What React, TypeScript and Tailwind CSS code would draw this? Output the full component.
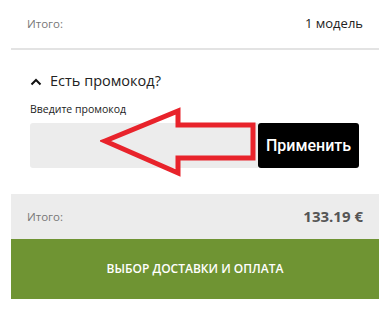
import React from 'react';

const App: React.FC = () => {
  return (
    <div className="w-[390px] h-[315px] bg-white px-[11px] font-['Open_Sans',sans-serif]">
      <div className="flex items-center justify-between h-[50px] px-4 border-b-2 border-[#e3e3e3]">
        <span className="text-[11.5px] text-[#777]">Итого:</span>
        <span className="text-[13px] text-[#222]">1 модель</span>
      </div>

      <div className="relative px-[19px] pt-[20px] h-[144px]">
        <div className="flex items-center gap-[8px] h-[22px]">
          <svg width="12" height="8" viewBox="0 0 12 8" className="mt-[1px]">
            <path d="M1.5 6.5 L6 2 L10.5 6.5" fill="none" stroke="#111" strokeWidth="2" />
          </svg>
          <span className="text-[14.5px] text-[#222]">Есть промокод?</span>
        </div>
        <div className="mt-[10px] text-[10.5px] text-[#222] leading-[14px]">Введите промокод</div>
        <div className="flex mt-[7px] h-[45px]">
          <input className="w-[228px] bg-[#ececec] rounded-l-[3px] outline-none px-3 text-sm" />
          <button className="w-[101px] bg-black text-white text-[16px] font-medium rounded-[3px] font-['Roboto',sans-serif]">
            Применить
          </button>
        </div>
        {/* red annotation arrow over the input */}
        <svg width="160" height="70" viewBox="0 0 160 70" className="absolute left-[89px] top-[57px] pointer-events-none">
          <path
            d="M5 34 L78 4 L78 18 L153 18 L153 51 L78 51 L78 66 Z"
            fill="none"
            stroke="#e8232b"
            strokeWidth="5"
            strokeLinejoin="miter"
          />
        </svg>
      </div>

      <div className="flex items-center justify-between h-[45px] px-4 bg-[#ececec]">
        <span className="text-[11.5px] text-[#777]">Итого:</span>
        <span className="text-[15px] font-bold text-[#555]">133.19 €</span>
      </div>
      <button className="w-full h-[60px] bg-[#6f9433] text-white text-[12px] font-semibold uppercase">
        Выбор доставки и оплата
      </button>
    </div>
  );
};

export default App;
